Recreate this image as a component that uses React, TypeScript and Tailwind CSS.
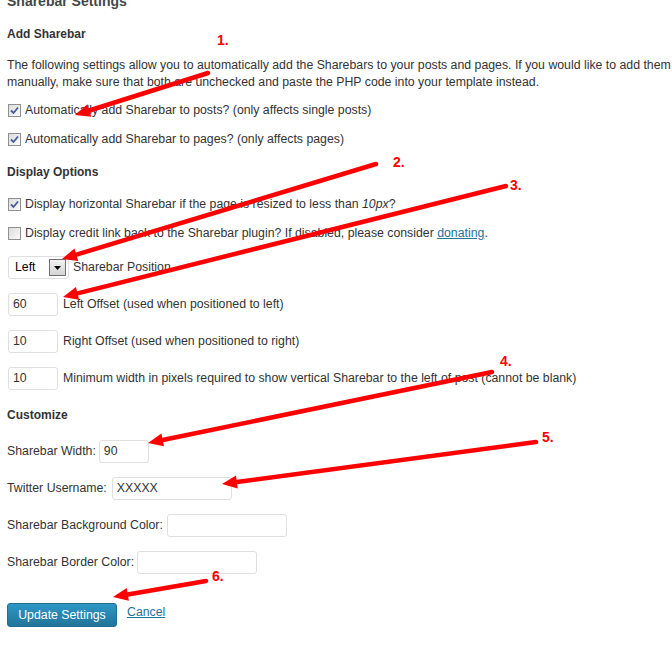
import React from 'react';

const font = { fontFamily: '"Liberation Sans", Arial, sans-serif' };

// red annotation arrows: [startX, startY, tipX, tipY]
const arrows: [number, number, number, number][] = [
  [208, 73, 75, 115],
  [376, 164, 62, 259],
  [506, 186, 63, 297],
  [492, 372, 148, 443],
  [536, 442, 222, 484],
  [206, 581, 113, 597],
];

const labels: [string, number, number][] = [
  ['1.', 217, 45],
  ['2.', 393, 167],
  ['3.', 510, 190],
  ['4.', 500, 366],
  ['5.', 542, 442],
  ['6.', 212, 581],
];

function Arrow({ a }: { a: [number, number, number, number] }) {
  const [x1, y1, x2, y2] = a;
  const len = Math.hypot(x2 - x1, y2 - y1);
  const ux = (x2 - x1) / len;
  const uy = (y2 - y1) / len;
  const bx = x2 - ux * 15;
  const by = y2 - uy * 15;
  const px = -uy * 6.5;
  const py = ux * 6.5;
  return (
    <g>
      <line x1={x1} y1={y1} x2={bx} y2={by} stroke="#ff0000" strokeWidth={4.5} strokeLinecap="round" />
      <polygon points={`${x2},${y2} ${bx + px},${by + py} ${bx - px},${by - py}`} fill="#ff0000" />
    </g>
  );
}

function Checkbox({ checked }: { checked?: boolean }) {
  return (
    <span className="ml-px flex h-[13px] w-[13px] shrink-0 items-center justify-center border border-[#8e8f8f] bg-gradient-to-br from-[#dcdcdc] to-[#fbfbfb]">
      {checked && (
        <svg width="9" height="9" viewBox="0 0 9 9">
          <path d="M1 4.5 L3.5 7 L8 1.5" fill="none" stroke="#4a5a94" strokeWidth="1.8" />
        </svg>
      )}
    </span>
  );
}

function CheckRow({ checked, children, className }: { checked?: boolean; children: React.ReactNode; className?: string }) {
  return (
    <div className={`flex h-[20px] items-center ${className ?? ''}`}>
      <Checkbox checked={checked} />
      <span className="ml-[4px] whitespace-nowrap">{children}</span>
    </div>
  );
}

function TextInput({ value, w }: { value?: string; w: string }) {
  return (
    <div className={`flex h-[23px] ${w} shrink-0 items-center rounded-[3px] border border-[#dfdfdf] bg-white pl-[4px]`}>
      {value}
    </div>
  );
}

function Heading({ children, className }: { children: React.ReactNode; className?: string }) {
  return <div className={`h-[16px] text-[12px] font-bold leading-[16px] text-[#333] ${className ?? ''}`}>{children}</div>;
}

export default function App() {
  return (
    <div className="relative h-[645px] w-[672px] overflow-hidden bg-white text-[12.3px] text-[#333]" style={font}>
      <div className="flex flex-col pl-[7px]">
        <div className="-mt-[7px] h-[16px] text-[14px] font-bold leading-[16px] text-[#464646]">Sharebar Settings</div>

        <Heading className="mt-[17px]">Add Sharebar</Heading>
        <p className="mt-[15px] whitespace-nowrap leading-[17px]">
          The following settings allow you to automatically add the Sharebars to your posts and pages. If you would like to add them
          <br />
          manually, make sure that both are unchecked and paste the PHP code into your template instead.
        </p>
        <CheckRow checked className="mt-[9px]">Automatically add Sharebar to posts? (only affects single posts)</CheckRow>
        <CheckRow checked className="mt-[9px]">Automatically add Sharebar to pages? (only affects pages)</CheckRow>

        <Heading className="mt-[15px]">Display Options</Heading>
        <CheckRow checked className="mt-[14px]">
          Display horizontal Sharebar if the page is resized to less than <em>10px</em>?
        </CheckRow>
        <CheckRow className="mt-[9px]">
          Display credit link back to the Sharebar plugin? If disabled, please consider{' '}
          <a className="text-[#21759b] underline">donating</a>.
        </CheckRow>

        <div className="mt-[13px] flex h-[23px] items-center">
          <div className="ml-px flex h-[23px] w-[61px] items-center justify-between rounded-[3px] border border-[#dfdfdf] pl-[6px] pr-[2px]">
            <span className="text-black">Left</span>
            <span className="flex h-[17px] w-[17px] items-center justify-center border border-[#707070] bg-gradient-to-b from-[#f2f2f2] to-[#d4d4d4]">
              <svg width="7" height="4" viewBox="0 0 7 4">
                <path d="M0 0 H7 L3.5 4 Z" fill="#000" />
              </svg>
            </span>
          </div>
          <span className="ml-[4px]">Sharebar Position</span>
        </div>

        <div className="mt-[14px] flex items-center pl-px">
          <TextInput value="60" w="w-[50px]" />
          <span className="ml-[5px]">Left Offset (used when positioned to left)</span>
        </div>
        <div className="mt-[14px] flex items-center pl-px">
          <TextInput value="10" w="w-[50px]" />
          <span className="ml-[5px]">Right Offset (used when positioned to right)</span>
        </div>
        <div className="mt-[14px] flex items-center pl-px">
          <TextInput value="10" w="w-[50px]" />
          <span className="ml-[5px] whitespace-nowrap">
            Minimum width in pixels required to show vertical Sharebar to the left of post (cannot be blank)
          </span>
        </div>

        <Heading className="mt-[17px]">Customize</Heading>
        <div className="mt-[17px] flex items-center">
          <span>Sharebar Width:</span>
          <span className="ml-[3px]"><TextInput value="90" w="w-[50px]" /></span>
        </div>
        <div className="mt-[14px] flex items-center">
          <span>Twitter Username:</span>
          <span className="ml-[5px]"><TextInput value="XXXXX" w="w-[120px]" /></span>
        </div>
        <div className="mt-[14px] flex items-center">
          <span>Sharebar Background Color:</span>
          <span className="ml-[4px]"><TextInput w="w-[120px]" /></span>
        </div>
        <div className="mt-[14px] flex items-center">
          <span>Sharebar Border Color:</span>
          <span className="ml-[3px]"><TextInput w="w-[120px]" /></span>
        </div>

        <div className="mt-[29px] flex items-center">
          <button className="h-[24px] w-[110px] rounded-[3px] border border-[#1f6f93] bg-gradient-to-b from-[#2e96c6] to-[#21759b] text-[12.3px] text-white">
            Update Settings
          </button>
          <a className="ml-[10px] -mt-[5px] text-[#21759b] underline">Cancel</a>
        </div>
      </div>

      <svg className="pointer-events-none absolute left-0 top-0" width="672" height="645">
        {arrows.map((a, i) => (
          <Arrow key={i} a={a} />
        ))}
        {labels.map(([t, x, y]) => (
          <text key={t} x={x} y={y} fill="#ff0000" fontSize="14" fontWeight="bold" fontFamily='"Liberation Sans", Arial, sans-serif'>
            {t}
          </text>
        ))}
      </svg>
    </div>
  );
}
